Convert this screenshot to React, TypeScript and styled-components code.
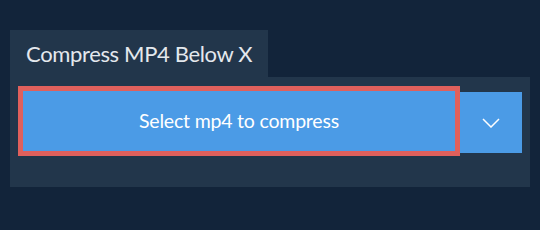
import React from "react";
import styled, { createGlobalStyle } from "styled-components";

const GlobalStyle = createGlobalStyle`
    html, body {
        margin: 0;
        padding: 0;
        background: #12243a;
    }
    body {
        font-family: Lato, "Open Sans", sans-serif;
    }
`;

const Page = styled.div`
    width: 540px;
    height: 230px;
    padding: 30px 10px 0 10px;
    box-sizing: border-box;
`;

const Tab = styled.div`
    display: inline-flex;
    align-items: center;
    width: 258px;
    height: 47px;
    padding: 0 0 1px 16px;
    box-sizing: border-box;
    background: #22364b;
    color: #e4e8ed;
    font-size: 22px;
    letter-spacing: -0.35px;
`;

const Panel = styled.div`
    display: flex;
    align-items: flex-start;
    height: 110px;
    padding: 9px 8px 0 8px;
    box-sizing: border-box;
    background: #22364b;
`;

const MainButton = styled.button`
    flex: 1;
    height: 70px;
    border: 5px solid #e0605c;
    background: #4b9be6;
    color: #ffffff;
    font-family: Lato, "Open Sans", sans-serif;
    font-size: 19.5px;
    letter-spacing: -0.2px;
    padding: 0 0 1px 0;
    cursor: pointer;
`;

const MenuButton = styled.button`
    width: 62px;
    height: 61px;
    margin-top: 6px;
    border: none;
    background: #4b9be6;
    display: flex;
    align-items: center;
    justify-content: center;
    padding: 0;
    cursor: pointer;
`;

const Chevron = styled.svg`
    width: 18px;
    height: 10px;
`;

export default function App() {
    return (
        <>
            <GlobalStyle />
            <Page>
                <Tab>Compress MP4 Below X</Tab>
                <Panel>
                    <MainButton>Select mp4 to compress</MainButton>
                    <MenuButton>
                        <Chevron viewBox="0 0 18 10" fill="none">
                            <path d="M1 1l8 8 8-8" stroke="#ffffff" strokeWidth="1.5" />
                        </Chevron>
                    </MenuButton>
                </Panel>
            </Page>
        </>
    );
}
